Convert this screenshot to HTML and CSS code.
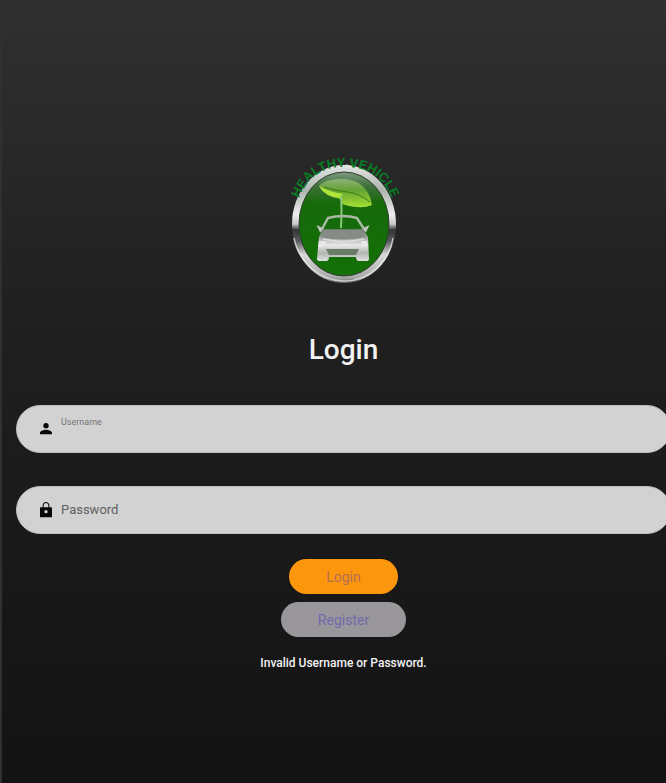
FILE: index.html
```html
<!DOCTYPE html>
<html lang="en">
<head>
<meta charset="utf-8">
<meta name="viewport" content="width=device-width, initial-scale=1">
<title>Login</title>
<link rel="stylesheet" href="styles.css">
</head>
<body>
<main class="page">
  <svg class="logo" viewBox="0 0 130 150" role="img" aria-label="Healthy Vehicle">
    <defs>
      <linearGradient id="chrome" x1="0" y1="0" x2="0" y2="1">
        <stop offset="0" stop-color="#e2e5e2"/><stop offset=".22" stop-color="#aeb5ae"/>
        <stop offset=".42" stop-color="#eeeeee"/><stop offset=".5" stop-color="#c9c9c9"/>
        <stop offset=".55" stop-color="#333535"/><stop offset=".64" stop-color="#555858"/>
        <stop offset=".76" stop-color="#d9d9d9"/><stop offset=".95" stop-color="#aaaaaa"/><stop offset="1" stop-color="#666666"/>
      </linearGradient>
      <linearGradient id="disc" x1="0" y1="0" x2="0" y2="1">
        <stop offset="0" stop-color="#7d9a80"/><stop offset=".14" stop-color="#3c7038"/>
        <stop offset=".3" stop-color="#166a0a"/><stop offset="1" stop-color="#137006"/>
      </linearGradient>
      <linearGradient id="leaf" x1="0" y1="0" x2="0" y2="1">
        <stop offset="0" stop-color="#8fb07a"/><stop offset=".4" stop-color="#62a332"/><stop offset="1" stop-color="#a5e032"/>
      </linearGradient>
      <linearGradient id="car" x1="0" y1="0" x2="0" y2="1">
        <stop offset="0" stop-color="#6d766d"/><stop offset=".28" stop-color="#a6aaa6"/>
        <stop offset=".5" stop-color="#e7e8e7"/><stop offset=".75" stop-color="#b1b6b1"/><stop offset="1" stop-color="#e0e2e0"/>
      </linearGradient>
      <path id="arc" d="M19 56C28 31 44 22 66 22S104 31 114 56"/>
    </defs>
    <ellipse cx="65" cy="79" rx="52" ry="59" fill="url(#chrome)"/>
    <path d="M61 23Q68 16 74 23Z" fill="#dfe5df"/>
    <ellipse cx="65" cy="79" rx="45" ry="52" fill="url(#disc)" stroke="#303b30" stroke-width="1"/>
    <path d="M15 93C19 115 39 136 65 136S110 117 114 93" fill="none" stroke="#eeeeee" stroke-width="1.5" opacity=".7"/>
    <text class="logo-text"><textPath href="#arc" startOffset="50%" text-anchor="middle">HEALTHY VEHICLE</textPath></text>
    <path d="M40 41C47 33 70 31 81 39Q91 46 93 60Q82 65 63 59Q63 54 58 53Q46 51 40 41Z" fill="url(#leaf)"/>
    <path d="M40 41Q46 52 61 53L64 49Q50 47 40 41Z" fill="#b0e53c"/>
    <path d="M45 42Q58 46 68 47Q80 48 91 57" fill="none" stroke="#3e7a14" stroke-width="1"/>
    <path d="M62 51Q63 63 62 83" fill="none" stroke="#8dc67b" stroke-width="2"/>
    <path d="M43 84L49 73Q64 69 78 73L85 84" fill="none" stroke="#a8b8a5" stroke-width="2.5"/>
    <path d="M38 81L44 84L41 87M90 81L84 84L87 87" fill="#c9d0c8" stroke="#b6bdb5" stroke-width="1.5"/>
    <path d="M44 84H84L89 92L90 114Q90 116 87 116H80Q77 116 77 112H50Q50 116 47 116H41Q38 116 38 114L40 92Z" fill="url(#car)"/>
    <path d="M45 85H83L87 92Q64 97 41 92Z" fill="#858c85"/>
    <path d="M44 94Q64 99 85 94M48 102H81" fill="none" stroke="#dddddd" stroke-width="1.5"/>
    <path d="M47 104H80L77 110H50Z" fill="#6b7d69"/>
    <path d="M40 96H47L45 102H39M82 96H88V102H84" fill="#e7e9e7"/>
  </svg>
  <h1 class="title">Login</h1>
  <form class="form">
    <div class="field">
      <svg class="icon" viewBox="0 0 24 24" aria-hidden="true"><path d="M12 11a4 4 0 1 0 0-8 4 4 0 0 0 0 8zM12 13c-3 0-9 1.400-9 5v2h18v-2c0-3.600-6-5-9-5z"/></svg>
      <div class="entry">
        <label class="label label-raised" for="username">Username</label>
        <input class="input" id="username" type="text" autocomplete="username">
      </div>
    </div>
    <div class="field">
      <svg class="icon" viewBox="0 0 24 24" aria-hidden="true"><path fill-rule="evenodd" d="M19 8h-2V5c0-2.800-2.200-5-5-5S7 2.200 7 5v3H4c-.6 0-1 .4-1 1v13c0 .6.4 1 1 1h16c.6 0 1-.4 1-1V9c0-.6-.4-1-1-1zM8.500 5c0-1.900 1.600-3.500 3.500-3.500S15.500 3.100 15.500 5v3h-7zM12 12a2.500 2.500 0 1 1 0 5 2.500 2.500 0 0 1 0-5z"/></svg>
      <div class="entry">
        <label class="label" for="password">Password</label>
        <input class="input" id="password" type="password" autocomplete="current-password">
      </div>
    </div>
    <div class="actions">
      <button class="button button-login" type="submit">Login</button>
      <button class="button button-register" type="button">Register</button>
    </div>
  </form>
  <p class="error" role="alert">Invalid Username or Password.</p>
</main>
</body>
</html>
```
FILE: styles.css
```css
* {
  box-sizing: border-box;
}

body {
  margin: 0;
  min-height: 100vh;
  overflow-x: hidden;
  font-family: Roboto, "Liberation Sans", sans-serif;
  color: #f2f2f2;
  background: linear-gradient(#303030, #202020 40%, #191919 70%, #131313);
  border-left: 2px solid #303030;
}

.page {
  display: flex;
  flex-direction: column;
  align-items: center;
  margin-right: -5px;
  padding: 145px 0 48px 14px;
}

.logo {
  width: 130px;
  height: 150px;
}

.logo-text {
  font-family: "Liberation Sans", sans-serif;
  font-size: 13px;
  font-weight: 700;
  fill: #087d24;
}

.title {
  margin: 36px 0;
  font-size: 28px;
  line-height: 38px;
  font-weight: 500;
}

.form {
  width: 100%;
}

.field {
  display: flex;
  align-items: center;
  gap: 7px;
  height: 48px;
  margin-bottom: 33px;
  padding: 0 24px 0 21px;
  border: 1px solid #bdbdbd;
  border-radius: 24px;
  background: #d2d2d2;
}

.icon {
  width: 16px;
  height: 18px;
  fill: #080808;
}

.entry {
  display: grid;
  flex: 1;
  height: 100%;
}

.label,
.input {
  grid-area: 1 / 1;
}

.label {
  align-self: center;
  font-size: 13px;
  line-height: 16px;
  color: #606060;
}

.label-raised {
  align-self: start;
  padding-top: 8px;
  font-size: 9px;
  color: #747474;
}

.input {
  width: 100%;
  padding: 0;
  border: 0;
  outline: 0;
  background: transparent;
  font: inherit;
  color: #111111;
}

.actions {
  display: flex;
  flex-direction: column;
  align-items: center;
  gap: 8px;
  margin-top: -8px;
}

.button {
  height: 35px;
  padding: 0 37px;
  border: 0;
  border-radius: 18px;
  font-family: inherit;
  font-size: 14px;
}

.button-login {
  background: #fc960c;
  color: #b36f58;
}

.button-register {
  background: #99979b;
  color: #716bab;
}

.error {
  margin: 18px 0 0;
  font-size: 12px;
  line-height: 16px;
  font-weight: 500;
}
```
